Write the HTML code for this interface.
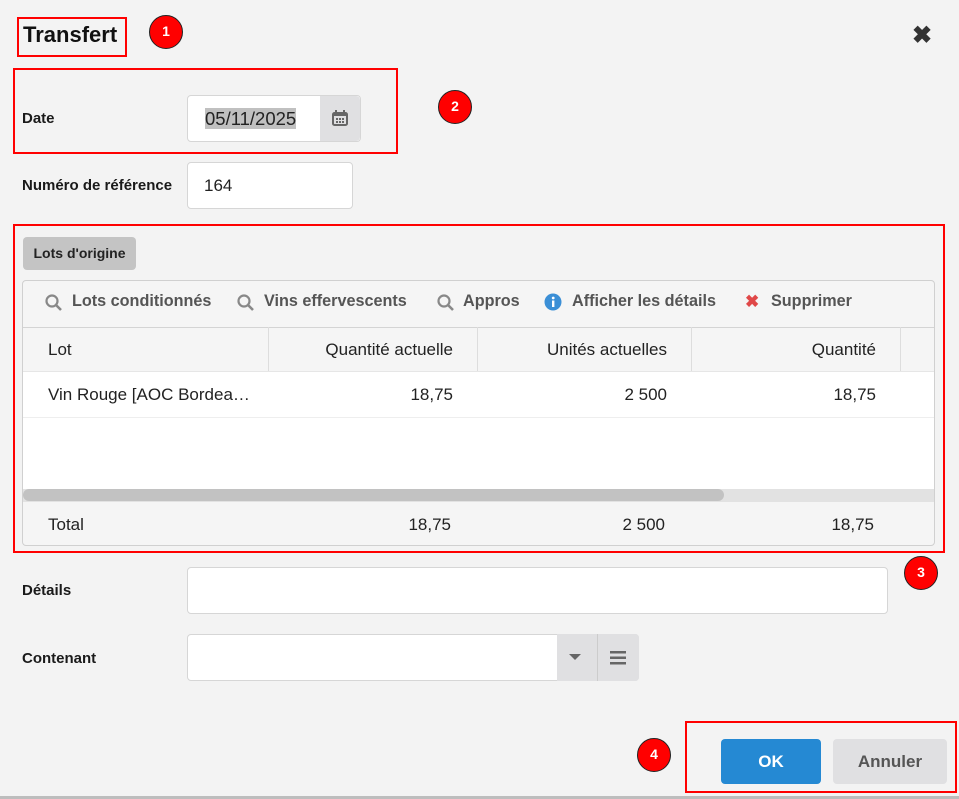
<!DOCTYPE html>
<html><head><meta charset="utf-8"><style>
*{box-sizing:border-box;margin:0;padding:0}
body{width:959px;height:799px;background:#f3f3f3;font-family:"Liberation Sans",Arial,sans-serif;position:relative;overflow:hidden;color:#222}
.a{position:absolute}
.red{position:absolute;border:2px solid #f00}
.badge{position:absolute;width:34px;height:34px;border-radius:50%;background:#f00;border:1.5px solid #222;color:#fff;font-weight:bold;font-size:14px;text-align:center;line-height:31px}
.lbl{position:absolute;font-size:15px;font-weight:bold;color:#1a1a1a}
.inp{position:absolute;background:#fff;border:1px solid #d6d6d6;border-radius:4px;font-size:17px;color:#222;padding-left:16px}
.tb{position:absolute;top:292px;font-size:16.2px;color:#555;font-weight:bold}
.cell{position:absolute;font-size:17px;color:#222}
.vl{position:absolute;width:1px;background:#ddd}
</style></head><body>
<div class="a" style="left:23px;top:22px;font-size:22px;font-weight:bold;color:#111">Transfert</div>
<div class="red" style="left:17px;top:17px;width:110px;height:40px"></div>
<div class="badge" style="left:149px;top:15px">1</div>
<div class="a" style="left:912px;top:24px;font-size:24px;font-weight:bold;color:#333;line-height:24px">✖</div>

<div class="red" style="left:13px;top:68px;width:385px;height:86px"></div>
<div class="badge" style="left:438px;top:90px">2</div>
<div class="lbl" style="left:22px;top:110px">Date</div>
<div class="inp" style="left:187px;top:95px;width:174px;height:47px;line-height:45px;font-size:18.5px;padding-left:17px"><span style="background:#c0c0c0">05/11/2025</span></div>
<div class="a" style="left:320px;top:96px;width:40px;height:45px;background:#e0e0e2;border-radius:0 4px 4px 0">
<svg width="40" height="45" viewBox="0 0 40 45"><rect x="13" y="17" width="14" height="12" rx="1.5" fill="none" stroke="#666" stroke-width="2"/><rect x="13" y="17" width="14" height="3" fill="#666"/><rect x="15" y="14" width="2" height="4" fill="#666"/><rect x="23" y="14" width="2" height="4" fill="#666"/><g fill="#666"><rect x="16" y="22" width="2" height="2"/><rect x="19" y="22" width="2" height="2"/><rect x="22" y="22" width="2" height="2"/><rect x="16" y="25" width="2" height="2"/><rect x="19" y="25" width="2" height="2"/><rect x="22" y="25" width="2" height="2"/></g></svg></div>

<div class="lbl" style="left:22px;top:177px">Numéro de référence</div>
<div class="inp" style="left:187px;top:162px;width:166px;height:47px;line-height:45px">164</div>

<div class="red" style="left:13px;top:224px;width:932px;height:329px"></div>
<div class="a" style="left:23px;top:237px;width:113px;height:33px;background:#c4c4c4;border-radius:4px;font-size:14px;font-weight:bold;line-height:33px;text-align:center;color:#222">Lots d'origine</div>

<div class="a" style="left:22px;top:280px;width:913px;height:266px;border:1px solid #d0d0d0;border-radius:4px;background:#f5f5f5;overflow:hidden">
 <div class="a" style="left:0;top:46px;width:913px;height:1px;background:#d4d4d4"></div>
 <div class="a" style="left:0;top:90px;width:913px;height:1px;background:#e6e6e6"></div>
 <div class="a" style="left:0;top:91px;width:913px;height:117px;background:#fff"></div>
 <div class="a" style="left:0;top:136px;width:913px;height:1px;background:#eee"></div>
 <div class="a" style="left:0;top:208px;width:913px;height:13px;background:#e2e2e2"></div>
 <div class="a" style="left:0;top:208px;width:701px;height:12px;background:#c2c2c2;border-radius:6px"></div>
</div>
<div class="vl" style="left:268px;top:327px;height:44px"></div>
<div class="vl" style="left:477px;top:327px;height:44px"></div>
<div class="vl" style="left:691px;top:327px;height:44px"></div>
<div class="vl" style="left:900px;top:327px;height:44px"></div>

<svg class="a" style="left:44px;top:293px" width="20" height="20"><circle cx="8" cy="8" r="5.5" fill="none" stroke="#888" stroke-width="2.2"/><line x1="12" y1="12" x2="17" y2="17" stroke="#888" stroke-width="2.6"/></svg>
<div class="tb" style="left:72px">Lots conditionnés</div>
<svg class="a" style="left:236px;top:293px" width="20" height="20"><circle cx="8" cy="8" r="5.5" fill="none" stroke="#888" stroke-width="2.2"/><line x1="12" y1="12" x2="17" y2="17" stroke="#888" stroke-width="2.6"/></svg>
<div class="tb" style="left:264px">Vins effervescents</div>
<svg class="a" style="left:436px;top:293px" width="20" height="20"><circle cx="8" cy="8" r="5.5" fill="none" stroke="#888" stroke-width="2.2"/><line x1="12" y1="12" x2="17" y2="17" stroke="#888" stroke-width="2.6"/></svg>
<div class="tb" style="left:463px">Appros</div>
<svg class="a" style="left:544px;top:293px" width="18" height="18"><circle cx="9" cy="9" r="8.5" fill="#3b8fd6"/><rect x="8" y="7.5" width="2.4" height="6.5" fill="#fff"/><circle cx="9.2" cy="5" r="1.4" fill="#fff"/></svg>
<div class="tb" style="left:572px">Afficher les détails</div>
<div class="a" style="left:745px;top:292px;font-size:17px;color:#e04848;font-weight:bold">✖</div>
<div class="tb" style="left:771px">Supprimer</div>

<div class="cell" style="left:48px;top:340px">Lot</div>
<div class="cell" style="left:268px;width:185px;text-align:right;top:340px">Quantité actuelle</div>
<div class="cell" style="left:477px;width:190px;text-align:right;top:340px">Unités actuelles</div>
<div class="cell" style="left:691px;width:185px;text-align:right;top:340px">Quantité</div>

<div class="cell" style="left:48px;top:385px">Vin Rouge [AOC Bordea…</div>
<div class="cell" style="left:268px;width:185px;text-align:right;top:385px">18,75</div>
<div class="cell" style="left:477px;width:190px;text-align:right;top:385px">2 500</div>
<div class="cell" style="left:691px;width:185px;text-align:right;top:385px">18,75</div>

<div class="cell" style="left:48px;top:515px">Total</div>
<div class="cell" style="left:268px;width:183px;text-align:right;top:515px">18,75</div>
<div class="cell" style="left:477px;width:188px;text-align:right;top:515px">2 500</div>
<div class="cell" style="left:691px;width:183px;text-align:right;top:515px">18,75</div>

<div class="badge" style="left:904px;top:556px">3</div>
<div class="lbl" style="left:22px;top:582px">Détails</div>
<div class="inp" style="left:187px;top:567px;width:701px;height:47px"></div>
<div class="lbl" style="left:22px;top:650px">Contenant</div>
<div class="inp" style="left:187px;top:634px;width:452px;height:47px"></div>
<div class="a" style="left:557px;top:634px;width:82px;height:47px;background:#e0e0e2;border-radius:0 4px 4px 0"></div>
<div class="a" style="left:597px;top:634px;width:1px;height:47px;background:#ccc"></div>
<svg class="a" style="left:569px;top:654px" width="14" height="8"><path d="M0 0H12L6 6Z" fill="#666"/></svg>
<svg class="a" style="left:610px;top:650px" width="18" height="16"><rect x="0" y="1" width="16" height="2.5" fill="#666"/><rect x="0" y="6.5" width="16" height="2.5" fill="#666"/><rect x="0" y="12" width="16" height="2.5" fill="#666"/></svg>

<div class="badge" style="left:637px;top:738px">4</div>
<div class="red" style="left:685px;top:721px;width:272px;height:72px"></div>
<div class="a" style="left:721px;top:739px;width:100px;height:45px;background:#2589d3;border-radius:4px;color:#fff;font-weight:bold;font-size:17px;text-align:center;line-height:45px">OK</div>
<div class="a" style="left:833px;top:739px;width:114px;height:45px;background:#e0e0e2;border-radius:4px;color:#555;font-weight:bold;font-size:17px;text-align:center;line-height:45px">Annuler</div>
<div class="a" style="left:0;top:796px;width:959px;height:3px;background:#bdbdbd"></div>
</body></html>
